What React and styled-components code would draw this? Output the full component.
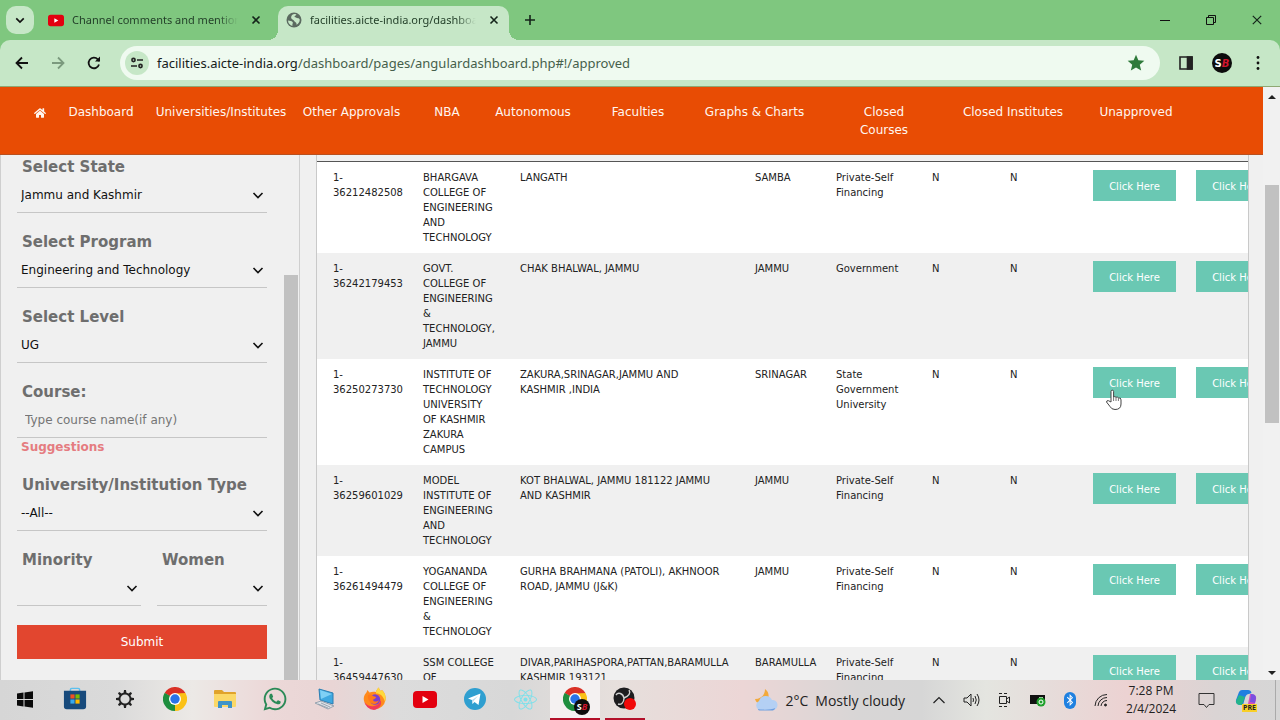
import { Fragment } from "react"
import styled, { createGlobalStyle } from "styled-components"
import { FaHome, FaWhatsapp, FaReact, FaBluetoothB } from "react-icons/fa"
import { MdStar } from "react-icons/md"

const GlobalStyle = createGlobalStyle`
  * {
    box-sizing: border-box;
  }

  body {
    margin: 0;
    overflow: hidden;
    font-family: "DejaVu Sans", Verdana, sans-serif;
  }

  button, input, select {
    font-family: inherit;
  }
`

const navItems = [
  "Dashboard",
  "Universities/Institutes",
  "Other Approvals",
  "NBA",
  "Autonomous",
  "Faculties",
  "Graphs & Charts",
  "Closed\nCourses",
  "Closed Institutes",
  "Unapproved",
]

const colleges = [
  {
    id: "1-36212482508",
    name: "BHARGAVA COLLEGE OF ENGINEERING AND TECHNOLOGY",
    address: "LANGATH",
    district: "SAMBA",
    type: "Private-Self Financing",
  },
  {
    id: "1-36242179453",
    name: "GOVT. COLLEGE OF ENGINEERING & TECHNOLOGY, JAMMU",
    address: "CHAK BHALWAL, JAMMU",
    district: "JAMMU",
    type: "Government",
  },
  {
    id: "1-36250273730",
    name: "INSTITUTE OF TECHNOLOGY UNIVERSITY OF KASHMIR ZAKURA CAMPUS",
    address: "ZAKURA,SRINAGAR,JAMMU AND KASHMIR ,INDIA",
    district: "SRINAGAR",
    type: "State Government University",
    hovered: true,
  },
  {
    id: "1-36259601029",
    name: "MODEL INSTITUTE OF ENGINEERING AND TECHNOLOGY",
    address: "KOT BHALWAL, JAMMU 181122 JAMMU AND KASHMIR",
    district: "JAMMU",
    type: "Private-Self Financing",
  },
  {
    id: "1-36261494479",
    name: "YOGANANDA COLLEGE OF ENGINEERING & TECHNOLOGY",
    address: "GURHA BRAHMANA (PATOLI), AKHNOOR ROAD, JAMMU (J&K)",
    district: "JAMMU",
    type: "Private-Self Financing",
  },
  {
    id: "1-36459447630",
    name: "SSM COLLEGE OF ENGINEERING AND TECHNOLOGY",
    address: "DIVAR,PARIHASPORA,PATTAN,BARAMULLA KASHMIR 193121",
    district: "BARAMULLA",
    type: "Private-Self Financing",
  },
]

const columnWidths = [90, 97, 235, 81, 96, 78, 83, 103, 103]

/* ---------- icons ---------- */

function Chevron({ size = 12, width = 1.6 }) {
  return (
    <svg width={size} height={size} viewBox="0 0 12 12" fill="none" stroke="#111" strokeWidth={width}>
      <path d="M1.500 4L6 8.500 10.500 4" />
    </svg>
  )
}

function Cross({ size = 10, width = 1.6 }) {
  return (
    <svg width={size} height={size} viewBox="0 0 10 10" stroke="#14241a" strokeWidth={width}>
      <path d="M1.500 1.500l7 7M8.500 1.500l-7 7" />
    </svg>
  )
}

function YouTube({ width = 16, height = 13 }) {
  return (
    <svg width={width} height={height} viewBox="0 0 24 17">
      <rect width="24" height="17" rx="4" fill="#e3000f" />
      <path d="M9.500 5v7l6-3.500z" fill="#fff" />
    </svg>
  )
}

function Globe() {
  return (
    <svg width="16" height="16" viewBox="0 0 16 16">
      <circle cx="8" cy="8" r="7.500" fill="#5b6a60" />
      <path
        d="M2 8.500c2 .2 3.500.5 4.500 1.500 1 1-.5 1.500 0 4-2.500-.4-4.500-2.800-4.500-5.500zM6 3c2-1.500 4-.8 4.500-.3-.8 1-2 1-2 2.300 1.500.3 2.200 1.200 3.500 1.200 1 0 1.600.6 1.800 1.500-.2 2.500-1.500 4-3.300 5 .2-1.600-.3-2.300-1.300-2.800C7.800 9 8 8 6.500 7.500 5 7 4.500 5 6 3z"
        fill="#c6e7c7"
      />
    </svg>
  )
}

function WindowsLogo() {
  return (
    <svg width="16" height="17" viewBox="0 0 16 17" fill="#0a0a0a">
      <path d="M0 2.500L6.500 1.600V8H0zM7.500 1.400L16 .2V8H7.500zM0 9h6.500v6.400L0 14.500zM7.500 9H16v7.800l-8.500-1.200z" />
    </svg>
  )
}

function ChromeLogo({ size = 24 }) {
  return (
    <svg width={size} height={size} viewBox="0 0 24 24">
      <path d="M12 12L1.600 6A12 12 0 0 1 22.400 6z" fill="#d93025" />
      <path d="M12 12L22.400 6A12 12 0 0 1 12 24z" fill="#fbc116" />
      <path d="M12 12v12A12 12 0 0 1 1.600 6z" fill="#1e8e3e" />
      <path d="M12 6h10.400a12 12 0 0 1-5.200 9z" fill="#fbc116" />
      <path d="M12 24l5.200-9-5.200 3z" fill="#fbc116" />
      <path d="M1.600 6h20.800L12 6.600z" fill="#d93025" />
      <path d="M1.600 6l5.200 9L12 12z" fill="#1e8e3e" />
      <circle cx="12" cy="12" r="6" fill="#fff" />
      <circle cx="12" cy="12" r="4.700" fill="#2a73e8" />
    </svg>
  )
}

function Store() {
  return (
    <svg width="24" height="24" viewBox="0 0 26 26">
      <path d="M8 5V3q0-1.500 1.500-1.500h7Q18 1.500 18 3v2" fill="none" stroke="#5cc0ee" strokeWidth="1.600" />
      <path d="M1 4h24v17q0 3-3 3H4q-3 0-3-3z" fill="#174a7c" />
      <path d="M8 8h4.500v4.500H8z" fill="#f25022" />
      <path d="M13.500 8H18v4.500h-4.500z" fill="#7fba00" />
      <path d="M8 13.500h4.500V18H8z" fill="#37a9ee" />
      <path d="M13.500 13.500H18V18h-4.500z" fill="#ffb900" />
    </svg>
  )
}

function Gear() {
  const teeth = [0, 45, 90, 135, 180, 225, 270, 315]
  return (
    <svg width="20" height="20" viewBox="0 0 20 20">
      <circle cx="10" cy="10" r="5.500" fill="none" stroke="#222" strokeWidth="1.800" />
      {teeth.map((angle) => (
        <path key={angle} d="M8.500 4.500L9 1h2l.5 3.500z" fill="#222" transform={`rotate(${angle} 10 10)`} />
      ))}
    </svg>
  )
}

function Folder() {
  return (
    <svg width="22" height="20" viewBox="0 0 22 20">
      <path d="M0 2q0-1 1-1h7l2 2h11q1 0 1 1v13H0z" fill="#e0a32b" />
      <path d="M0 5h22v12q0 1-1 1H1q-1 0-1-1z" fill="#fbd867" />
      <path d="M4 19v-6q0-1 1-1h12q1 0 1 1v6h-4v-3H8v3z" fill="#3f94c8" />
    </svg>
  )
}

function Computer() {
  return (
    <svg width="22" height="24" viewBox="0 0 22 24">
      <path d="M5 2l14 4v11L6 13z" fill="#3fa8e0" stroke="#2c7fb3" />
      <path d="M6 3l12 4-11 5z" fill="#7fd0f5" />
      <path d="M1 16l6-2 13 5-6 3z" fill="#dfe3e8" stroke="#99a4b0" />
      <path d="M4 17l10 4M7 16l9 4" stroke="#99a4b0" />
    </svg>
  )
}

function Firefox() {
  return (
    <svg width="24" height="24" viewBox="0 0 24 24">
      <path d="M3 6c1-1 1-2 1-3 1 .7 2 1.500 2.500 2.500C9 4.500 11 4.500 13 5c.5-2 1.500-3.500 3-4.500 0 2 1 3 2 3.500l1-1c3 3 4 6 3.500 10A11 11 0 0 1 1 14c-.7-3 0-6 2-8z" fill="#ff8a1c" />
      <path d="M16 .5c0 2 1 3 2 3.500l1-1c3 3 4.500 7 3 12-1-4-3-7-6-8-2-.5-3 .5-3-2 .5-2 1.500-3.500 3-4.500z" fill="#ffd93b" />
      <path d="M1 14c1 3 5 6 10 5 4-.8 6-3 6.500-6 2 4-1 9-6.500 10A11 11 0 0 1 1 14z" fill="#f03a5b" />
      <circle cx="12" cy="12.500" r="5.200" fill="#7a3fd0" />
      <path d="M5 8c2-1 4-.5 5 1l3 1c0 2-3 2-3 3 1 2 4 2 6 0-1 4-5 5-8 3-2.500-2-3.500-5-3-8z" fill="#ff7a1a" />
    </svg>
  )
}

function Telegram() {
  return (
    <svg width="22" height="22" viewBox="0 0 22 22">
      <circle cx="11" cy="11" r="11" fill="#2f9fd0" />
      <path d="M4 10.500l12.500-5L14.500 17l-4-3-2 2-.6-4z" fill="#fff" />
      <path d="M8 12l6-4-4.500 5-1 3z" fill="#b9dcee" />
    </svg>
  )
}

function Obs() {
  return (
    <svg width="24" height="24" viewBox="0 0 24 24">
      <circle cx="11" cy="11" r="10.500" fill="#1d1d1f" />
      <g fill="none" stroke="#d0d0d0" strokeWidth="1.400">
        <path d="M11 11C10 6 5 5 3 8" />
        <path d="M11 11c5-2 7-5 5-8" />
        <path d="M11 11c0 5-3 7-6 6" />
      </g>
      <circle cx="17" cy="17" r="6" fill="#f10909" />
    </svg>
  )
}

function Weather() {
  return (
    <svg width="26" height="24" viewBox="0 0 26 24">
      <path d="M12 1c0 6-4 10-10 10 1 4 4 5 8 5 6-2 8-11 2-15z" fill="#f2a93b" />
      <path d="M6 22a5 5 0 0 1 0-9 7 7 0 0 1 13-1 5 5 0 0 1 1 10z" fill="#b4d0f4" />
      <path d="M5 21c3 1 14 1 17-1 0 2-2 2.500-3 2.500H7c-1 0-2-.5-2-1.500z" fill="#6f9fe0" />
    </svg>
  )
}

function Speaker() {
  return (
    <svg width="17" height="16" viewBox="0 0 17 16" fill="none" stroke="#222">
      <path d="M1 6h3l4-4v12l-4-4H1z" />
      <path d="M10 6q1 2 0 4M12 4q2.500 4 0 8M14 2q4 6 0 12" />
    </svg>
  )
}

function Camera() {
  return (
    <svg width="14" height="16" viewBox="0 0 14 16" fill="none" stroke="#222">
      <path d="M1.500 4.500h7v7h-7zM8.500 7l3-2v6l-3-2" />
      <path d="M1 1.500h3M6 1.500h3M1 14.500h3M6 14.500h3" />
    </svg>
  )
}

function Battery() {
  return (
    <svg width="16" height="14" viewBox="0 0 16 14">
      <rect x="0.500" y="2.500" width="14" height="8" fill="#111" stroke="#111" />
      <path d="M9 4h4v5H9z" fill="#dfe5dc" />
      <circle cx="11" cy="9" r="4.500" fill="#1fa02b" />
      <circle cx="11" cy="9" r="2" fill="none" stroke="#fff" />
    </svg>
  )
}

function Wifi() {
  return (
    <svg width="14" height="14" viewBox="0 0 14 14" fill="none" stroke="#222">
      <path d="M1 13A12 12 0 0 1 13 1.500M4 13a9 9 0 0 1 9-8.500M7 13a6 6 0 0 1 6-5.500" />
      <circle cx="11.500" cy="12" r="1" fill="#222" />
    </svg>
  )
}

function Notification() {
  return (
    <svg width="17" height="17" viewBox="0 0 17 17" fill="none" stroke="#333">
      <path d="M1 1.500h15v11h-5l-2.500 3-2.500-3H1z" />
    </svg>
  )
}

function Copilot() {
  return (
    <svg width="22" height="20" viewBox="0 0 22 20">
      <path d="M7 0h6q3 0 3.500 3L14 4q-3 0-4 4l-2 7H5Q0 14 1 10l3-8q1-2 3-2z" fill="#1f7fe0" />
      <path d="M4 5l-3 6q0 4 4 4h2l3-8z" fill="#24b48a" />
      <path d="M15 4h2q5 1 4 6l-2 6q-1 3-4 3H9q3-1 4-5z" fill="#d44fc0" />
      <path d="M16 4q5 0 5 4l-1 5-5-1z" fill="#7a4fe0" />
    </svg>
  )
}

function Hand() {
  return (
    <svg width="18" height="22" viewBox="0 0 18 22">
      <path
        d="M6 13V2.500a1.300 1.300 0 0 1 2.600 0V8q1.200-1 2.400.3 1.400-.8 2.400.6 2.600-.6 2.600 2V15q0 5.500-6 5.500-3.500 0-5-3L1.500 13q0-1.700 2-1.300z"
        fill="#fff"
        stroke="#444"
      />
      <path d="M8.600 8v4M11 8.500V12M13.400 9v3" stroke="#777" />
    </svg>
  )
}

/* ---------- browser frame ---------- */

function Browser() {
  return (
    <>
      <TabStrip>
        <TabSearch aria-label="Search tabs"><Chevron size={10} width={2} /></TabSearch>
        <Tab>
          <YouTube />
          <TabTitle>Channel comments and mentions</TabTitle>
          <IconButton aria-label="Close tab" $size={20}><Cross /></IconButton>
        </Tab>
        <Tab $active>
          <Globe />
          <TabTitle>facilities.aicte-india.org/dashboard</TabTitle>
          <IconButton aria-label="Close tab" $size={20}><Cross /></IconButton>
        </Tab>
        <NewTab aria-label="New tab" $size={28}>
          <svg width="12" height="12" viewBox="0 0 12 12" stroke="#14241a" strokeWidth="1.600">
            <path d="M6 1v10M1 6h10" />
          </svg>
        </NewTab>
        <WindowControls>
          <IconButton aria-label="Minimize" $size={46}>
            <svg width="10" height="10" viewBox="0 0 10 10" stroke="#111"><path d="M0 5.500h10" /></svg>
          </IconButton>
          <IconButton aria-label="Restore" $size={46}>
            <svg width="10" height="10" viewBox="0 0 10 10" fill="none" stroke="#111">
              <path d="M.5 2.500h7v7h-7zM2.500 2.500v-2h7v7h-2" />
            </svg>
          </IconButton>
          <IconButton aria-label="Close" $size={46}><Cross size={12} width={1} /></IconButton>
        </WindowControls>
      </TabStrip>
      <Toolbar>
        <IconButton aria-label="Back" $size={36}>
          <svg width="14" height="14" viewBox="0 0 14 14" fill="none" stroke="#111" strokeWidth="1.800">
            <path d="M13 7H2M7 1.500L1.500 7 7 12.500" />
          </svg>
        </IconButton>
        <IconButton aria-label="Forward" $size={36}>
          <svg width="14" height="14" viewBox="0 0 14 14" fill="none" stroke="#7b9a7e" strokeWidth="1.800">
            <path d="M1 7h11M7 1.500L12.500 7 7 12.500" />
          </svg>
        </IconButton>
        <IconButton aria-label="Reload" $size={36}>
          <svg width="14" height="14" viewBox="0 0 14 14" fill="none" stroke="#111" strokeWidth="1.800">
            <path d="M12 8.500A5.300 5.300 0 1 1 10.800 3.300L12.500 5" />
            <path d="M13 .5V5.500H8z" fill="#111" stroke="none" />
          </svg>
        </IconButton>
        <AddressBar>
          <SiteInfo aria-label="Site information">
            <svg width="12" height="12" viewBox="0 0 12 12" fill="none" stroke="#222" strokeWidth="1.600">
              <circle cx="2.500" cy="3" r="1.600" />
              <circle cx="9.500" cy="9" r="1.600" />
              <path d="M6 3h6M0 9h6" />
            </svg>
          </SiteInfo>
          <Url>
            <b>facilities.aicte-india.org</b>/dashboard/pages/angulardashboard.php#!/approved
          </Url>
          <MdStar size={20} color="#2f7a3b" />
        </AddressBar>
        <ToolbarEnd>
          <IconButton aria-label="Side panel" $size={36}>
            <svg width="14" height="14" viewBox="0 0 14 14" fill="none" stroke="#222" strokeWidth="1.600">
              <path d="M1 1h12v12H1z" />
              <path d="M8.500 1H13v12H8.500z" fill="#222" />
            </svg>
          </IconButton>
          <IconButton aria-label="Profile" $size={36}>
            <Avatar>S<i>B</i></Avatar>
          </IconButton>
          <IconButton aria-label="Menu" $size={36}>
            <svg width="4" height="16" viewBox="0 0 4 16" fill="#111">
              <circle cx="2" cy="2.500" r="1.400" /><circle cx="2" cy="8" r="1.400" /><circle cx="2" cy="13.500" r="1.400" />
            </svg>
          </IconButton>
        </ToolbarEnd>
      </Toolbar>
    </>
  )
}

/* ---------- page ---------- */

function SelectField({ id, label, value }) {
  return (
    <Field>
      <Label htmlFor={id}>{label}</Label>
      <SelectBox>
        <select id={id} defaultValue={value}>
          <option>{value}</option>
        </select>
        <Chevron />
      </SelectBox>
    </Field>
  )
}

function Filters() {
  return (
    <Sidebar>
      <FilterForm onSubmit={(e) => e.preventDefault()}>
        <SelectField id="state" label="Select State" value="Jammu and Kashmir" />
        <SelectField id="program" label="Select Program" value="Engineering and Technology" />
        <SelectField id="level" label="Select Level" value="UG" />
        <Field>
          <Label htmlFor="course">Course:</Label>
          <TextInput id="course" type="text" placeholder="Type course name(if any)" />
          <Suggestions>Suggestions</Suggestions>
        </Field>
        <SelectField id="type" label="University/Institution Type" value="--All--" />
        <FieldPair>
          <SelectField id="minority" label="Minority" value="" />
          <SelectField id="women" label="Women" value="" />
        </FieldPair>
        <Submit type="submit">Submit</Submit>
      </FilterForm>
      <SideTrack>
        <SideThumb />
      </SideTrack>
    </Sidebar>
  )
}

function Results() {
  return (
    <ResultsPanel>
      <Table>
        <colgroup>
          {columnWidths.map((width, i) => (
            <col key={i} width={width} />
          ))}
        </colgroup>
        <tbody>
          {colleges.map((college) => (
            <tr key={college.id}>
              <td>{college.id}</td>
              <td>{college.name}</td>
              <AddressCell>{college.address}</AddressCell>
              <td>{college.district}</td>
              <td>{college.type}</td>
              <td>N</td>
              <td>N</td>
              <td>
                <ButtonHolder>
                  <ClickHere>Click Here</ClickHere>
                  {college.hovered && <Pointer><Hand /></Pointer>}
                </ButtonHolder>
              </td>
              <td><ClickHere>Click Here</ClickHere></td>
            </tr>
          ))}
        </tbody>
      </Table>
    </ResultsPanel>
  )
}

/* ---------- taskbar ---------- */

function Taskbar() {
  return (
    <Bar>
      <TaskButton aria-label="Start"><WindowsLogo /></TaskButton>
      <TaskButton aria-label="Store"><Store /></TaskButton>
      <TaskButton aria-label="Settings"><Gear /></TaskButton>
      <TaskButton aria-label="Chrome"><ChromeLogo /></TaskButton>
      <TaskButton aria-label="Files"><Folder /></TaskButton>
      <TaskButton aria-label="WhatsApp"><FaWhatsapp size={26} color="#2b8a57" /></TaskButton>
      <TaskButton aria-label="Computer"><Computer /></TaskButton>
      <TaskButton aria-label="Firefox"><Firefox /></TaskButton>
      <TaskButton aria-label="YouTube"><YouTube width={24} height={17} /></TaskButton>
      <TaskButton aria-label="Telegram"><Telegram /></TaskButton>
      <TaskButton aria-label="React"><FaReact size={23} color="#7fe0ea" /></TaskButton>
      <TaskButton aria-label="Chrome window" $open $active>
        <ChromeLogo />
        <ProfileBadge>S<i>B</i></ProfileBadge>
      </TaskButton>
      <TaskButton aria-label="OBS" $open $narrow><Obs /></TaskButton>
      <Tray>
        <WeatherInfo>
          <Weather />
          <span>2°C</span>
          <span>Mostly cloudy</span>
        </WeatherInfo>
        <TrayIcons>
          <svg width="12" height="8" viewBox="0 0 12 8" fill="none" stroke="#222" strokeWidth="1.200">
            <path d="M.5 7L6 1.500 11.500 7" />
          </svg>
          <Speaker />
          <Camera />
          <Battery />
          <BluetoothPill><FaBluetoothB size={12} /></BluetoothPill>
          <Wifi />
        </TrayIcons>
        <Clock>
          <span>7:28 PM</span>
          <span>2/4/2024</span>
        </Clock>
        <Notification />
        <CopilotIcon>
          <Copilot />
          <small>PRE</small>
        </CopilotIcon>
      </Tray>
    </Bar>
  )
}

function App() {
  return (
    <Screen>
      <GlobalStyle />
      <Browser />
      <Viewport>
        <Page>
          <Nav>
            <a href="#home" aria-label="Home"><FaHome size={12} /></a>
            {navItems.map((item) => (
              <a key={item} href="#approved">
                {item.split("\n").map((line, i) => (
                  <Fragment key={line}>{i > 0 && <br />}{line}</Fragment>
                ))}
              </a>
            ))}
          </Nav>
          <Content>
            <Filters />
            <Results />
          </Content>
        </Page>
        <PageTrack>
          <Arrow $up />
          <PageThumb />
          <Arrow />
        </PageTrack>
      </Viewport>
      <Taskbar />
    </Screen>
  )
}

const Screen = styled.div`
  display: flex;
  flex-direction: column;
  height: 100vh;
  overflow: hidden;
  background-color: #7fc77f;
`

const TabStrip = styled.div`
  display: flex;
  align-items: center;
  height: 40px;
  padding-left: 6px;
`

const IconButton = styled.button`
  display: flex;
  align-items: center;
  justify-content: center;
  flex-shrink: 0;
  width: ${(props) => props.$size}px;
  height: 28px;
  padding: 0;
  border: none;
  background: none;
`

const NewTab = styled(IconButton)`
  margin-left: 7px;
`

const TabSearch = styled.button`
  display: flex;
  align-items: center;
  justify-content: center;
  width: 28px;
  height: 28px;
  margin-right: 6px;
  padding: 0;
  border: none;
  border-radius: 10px;
  background-color: #c6e7c7;
`

const Tab = styled.div`
  position: relative;
  display: flex;
  align-items: center;
  gap: 8px;
  width: ${(props) => (props.$active ? 231 : 238)}px;
  height: 34px;
  align-self: flex-end;
  padding: 0 ${(props) => (props.$active ? 5 : 12)}px 6px 8px;
  border-radius: 10px 10px 0 0;
  background-color: ${(props) => (props.$active ? "#c6e7c7" : "transparent")};

  /* flared feet of the selected tab */
  &::before,
  &::after {
    content: ${(props) => (props.$active ? '""' : "none")};
    position: absolute;
    bottom: 0;
    width: 10px;
    height: 10px;
  }

  &::before {
    left: -10px;
    background: radial-gradient(circle at 0 0, transparent 10px, #c6e7c7 10px);
  }

  &::after {
    right: -10px;
    background: radial-gradient(circle at 100% 0, transparent 10px, #c6e7c7 10px);
  }
`

const TabTitle = styled.span`
  flex: 1;
  overflow: hidden;
  white-space: nowrap;
  font-family: "Noto Sans", "Segoe UI", sans-serif;
  font-size: 11px;
  line-height: 18px;
  color: #24402a;
  mask-image: linear-gradient(to right, #000 88%, transparent);
`

const WindowControls = styled.div`
  display: flex;
  margin-left: auto;
`

const Toolbar = styled.div`
  display: flex;
  align-items: center;
  height: 47px;
  padding: 0 4px;
  border-bottom: 1px solid #8fa873;
  border-radius: 10px 10px 0 0;
  background-color: #c6e7c7;
`

const AddressBar = styled.div`
  display: flex;
  align-items: center;
  flex: 1;
  gap: 8px;
  height: 34px;
  margin-left: 8px;
  padding: 0 14px 0 5px;
  border-radius: 17px;
  background-color: #effaf0;
`

const SiteInfo = styled.button`
  display: flex;
  align-items: center;
  justify-content: center;
  width: 24px;
  height: 24px;
  padding: 0;
  border: none;
  border-radius: 50%;
  background-color: #c6e7c7;
`

const Url = styled.span`
  flex: 1;
  font-family: "Noto Sans", "Segoe UI", sans-serif;
  font-size: 13px;
  line-height: 20px;
  color: #465f4b;

  b {
    font-weight: normal;
    color: #16201a;
  }
`

const ToolbarEnd = styled.div`
  display: flex;
  margin-left: 8px;
`

const Avatar = styled.span`
  display: flex;
  align-items: center;
  justify-content: center;
  width: 20px;
  height: 20px;
  border-radius: 50%;
  background-color: #0c0c0c;
  color: #fff;
  font-size: 10px;
  font-weight: bold;

  i {
    color: #d0142c;
  }
`

const Viewport = styled.div`
  display: flex;
  flex: 1;
  min-height: 0;
`

const Page = styled.div`
  display: flex;
  flex-direction: column;
  flex: 1;
  min-width: 0;
  background-color: #f0f0f0;
`

const Nav = styled.nav`
  display: grid;
  grid-template-columns: 40fr 82fr 158fr 103fr 88fr 84fr 126fr 107fr 152fr 106fr 140fr;
  flex-shrink: 0;
  height: 68px;
  padding: 16px 57px 0 20px;
  background-color: #e84c04;
  border-bottom: 1px solid #b9501f;

  a {
    color: #fff6f0;
    font-size: 12px;
    line-height: 18px;
    text-align: center;
    text-decoration: none;
    white-space: nowrap;
  }

  svg {
    vertical-align: middle;
  }
`

const Content = styled.div`
  display: flex;
  flex: 1;
  gap: 16px;
  min-height: 0;
  padding-right: 14px;
`

const Sidebar = styled.aside`
  display: flex;
  justify-content: space-between;
  width: 300px;
  flex-shrink: 0;
  overflow: hidden;
  border: solid #cfcfcf;
  border-width: 0 1px;
`

const FilterForm = styled.form`
  display: flex;
  flex-direction: column;
  gap: 19px;
  width: 266px;
  padding: 2px 0 0 16px;
`

const Field = styled.div`
  display: flex;
  flex-direction: column;
`

const FieldPair = styled.div`
  display: grid;
  grid-template-columns: 124fr 110fr;
  gap: 16px;
`

const Label = styled.label`
  padding-left: 5px;
  color: #6e6e6e;
  font-size: 15px;
  font-weight: bold;
  line-height: 20px;
  white-space: nowrap;
`

const SelectBox = styled.div`
  display: grid;
  align-items: center;
  height: 36px;
  border-bottom: 1px solid #c6c6c6;

  select,
  svg {
    grid-area: 1 / 1;
  }

  select {
    appearance: none;
    width: 100%;
    height: 35px;
    padding: 0 20px 0 4px;
    border: none;
    background: none;
    color: #111;
    font-size: 12px;
  }

  svg {
    justify-self: end;
    margin-right: 3px;
    pointer-events: none;
  }
`

const TextInput = styled.input`
  height: 36px;
  padding: 0 8px;
  border: none;
  border-bottom: 1px solid #c6c6c6;
  background: none;
  font-size: 12px;

  &::placeholder {
    color: #757575;
  }
`

const Suggestions = styled.span`
  padding-left: 4px;
  color: #e57c80;
  font-size: 12px;
  font-weight: bold;
  line-height: 18px;
`

const Submit = styled.button`
  height: 34px;
  border: none;
  background-color: #e2462f;
  color: #fff;
  font-size: 12px;
`

const SideTrack = styled.div`
  display: flex;
  flex-direction: column;
  width: 14px;
  margin-right: 1px;
`

const SideThumb = styled.div`
  flex: 1;
  margin-top: 120px;
  background-color: #c1c1c1;
`

const ResultsPanel = styled.main`
  flex: 1;
  min-width: 0;
  overflow: hidden;
  padding-top: 6px;
  border: solid #c9c9c9;
  border-width: 0 1px;
`

const Table = styled.table`
  width: 100%;
  min-width: 966px;
  table-layout: fixed;
  border-collapse: separate;
  border-spacing: 0;
  border-top: 1px solid #555;
  background-color: #fff;
  color: #222;
  font-size: 10px;
  line-height: 15px;

  tr:nth-child(even) {
    background-color: #f0f0f0;
  }

  td {
    padding: 8px 8px 8px 16px;
    vertical-align: top;
  }
`

const AddressCell = styled.td`
  && {
    padding-right: 16px;
  }
`

const ButtonHolder = styled.div`
  position: relative;
`

const ClickHere = styled.button`
  display: block;
  width: 83px;
  height: 31px;
  padding: 1px 0 0;
  border: none;
  background-color: #6ac8b3;
  color: #fff;
  font-size: 10px;
  white-space: nowrap;
`

const Pointer = styled.span`
  position: absolute;
  top: 22px;
  left: 12px;
`

const PageTrack = styled.div`
  display: flex;
  flex-direction: column;
  align-items: center;
  width: 17px;
  padding: 8px 0 5px;
  background-color: #f1f1f1;
`

const Arrow = styled.span`
  border: 4px solid transparent;
  border-top-width: ${(props) => (props.$up ? 0 : 4)}px;
  border-bottom-width: ${(props) => (props.$up ? 4 : 0)}px;
  border-top-color: #222;
  border-bottom-color: #222;
`

const PageThumb = styled.div`
  width: 14px;
  height: 41%;
  margin: 86px 0 auto;
  background-color: #c1c1c1;
`

const Bar = styled.footer`
  display: flex;
  height: 40px;
  flex-shrink: 0;
  background: linear-gradient(
    to right,
    #d6d6d6 0%,
    #dadada 9%,
    #ece9e6 15%,
    #ecd8d8 21%,
    #e9d5d5 26%,
    #dcdcdc 31%,
    #d8d8d8 40%,
    #e6dfdc 48%,
    #ecd6d6 58%,
    #d8d6d6 67%,
    #d6d6d6 72%,
    #e4e5e0 77%,
    #e6dcda 82%,
    #ecd2d2 88%,
    #dad4d4 95%,
    #d6d6d6 100%
  );
  font-family: "Open Sans", "Segoe UI", sans-serif;
`

const TaskButton = styled.button`
  position: relative;
  display: flex;
  align-items: center;
  justify-content: center;
  width: ${(props) => (props.$narrow ? 40 : 50)}px;
  margin-left: ${(props) => (props.$narrow ? 5 : 0)}px;
  padding: 0;
  border: none;
  border-bottom: 2px solid ${(props) => (props.$open ? "#b3102a" : "transparent")};
  background-color: ${(props) => (props.$active ? "#f4f1f1" : "transparent")};
  background-clip: padding-box;
`

const ProfileBadge = styled.span`
  position: absolute;
  right: 10px;
  bottom: 3px;
  width: 16px;
  height: 16px;
  border-radius: 50%;
  background-color: #0c0c0c;
  color: #fff;
  font-size: 9px;
  font-weight: bold;
  line-height: 16px;
  text-align: center;

  i {
    color: #d0142c;
  }
`

const Tray = styled.div`
  display: flex;
  align-items: center;
  margin: 0 4px 0 auto;
  padding-right: 18px;
  border-right: 1px solid #aaa;
  color: #222;
`

const WeatherInfo = styled.div`
  display: flex;
  align-items: center;
  gap: 7px;
  margin-right: 28px;
  font-size: 14px;
`

const TrayIcons = styled.div`
  display: flex;
  align-items: center;
  gap: 18px;
`

const BluetoothPill = styled.span`
  display: flex;
  align-items: center;
  justify-content: center;
  width: 12px;
  height: 17px;
  border-radius: 6px;
  background-color: #1f80e0;
  color: #fff;
`

const Clock = styled.div`
  display: flex;
  flex-direction: column;
  align-items: center;
  margin: 0 22px 0 18px;
  font-size: 12px;
  line-height: 18px;
`

const CopilotIcon = styled.span`
  position: relative;
  display: flex;
  margin-left: 20px;

  small {
    position: absolute;
    right: 0;
    bottom: -2px;
    padding: 0 1px;
    background-color: #f8cf28;
    color: #222;
    font-size: 7px;
    font-weight: bold;
    line-height: 8px;
  }
`

export default App
